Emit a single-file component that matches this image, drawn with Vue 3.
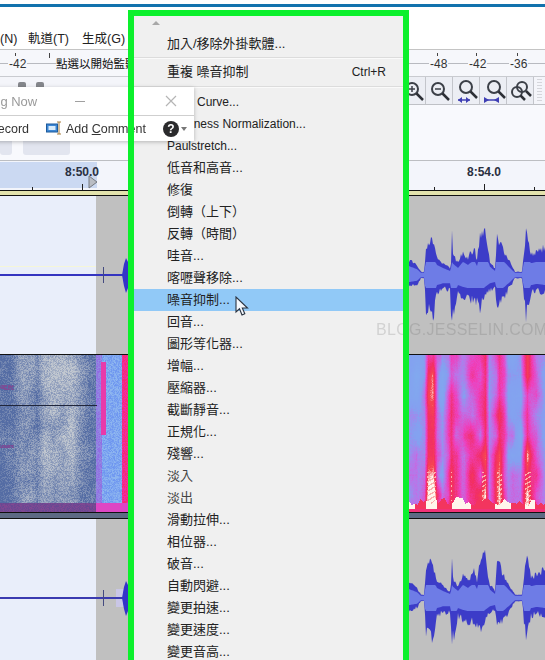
<template>
  <div class="screen" lang="zh-Hant">
    <div class="titlebar">
      <div class="blue-line"></div>
      <div class="menubar">
        <span class="m-n">(N)</span>
        <span class="m-track">軌道(T)</span>
        <span class="m-gen">生成(G)</span>
      </div>
    </div>

    <div class="meter-row">
      <div class="meter-line"></div>
      <i v-for="x in meterTicks" :key="x" class="meter-tick" :style="{ left: x + 'px' }"></i>
      <span v-for="m in meterLabels" :key="m.x" class="meter-label" :style="{ left: m.x + 'px' }">{{ m.text }}</span>
      <span class="meter-hint">點選以開始監聽</span>
    </div>

    <div class="tool-row">
      <div class="stub-icons"><i></i><i></i></div>
      <div class="zoom-tools">
        <button class="zoom-btn partial">
          <svg width="26" height="26" viewBox="0 0 26 26"><circle cx="11" cy="11" r="6" class="glass" /><path d="M8 11h6M11 8v6" class="mark" /><path d="M15.500 15.500 22 22" class="handle" /></svg>
        </button>
        <button class="zoom-btn">
          <svg width="26" height="26" viewBox="0 0 26 26"><circle cx="11" cy="11" r="6" class="glass" /><path d="M8 11h6" class="mark" /><path d="M15.500 15.500 22 22" class="handle" /></svg>
        </button>
        <button class="zoom-btn">
          <svg width="26" height="26" viewBox="0 0 26 26"><circle cx="12" cy="9" r="6" class="glass" /><path d="M16.500 13.500 23 20" class="handle" /><path d="M4 22h12" class="arrow-line" /><path d="M8 19v6l-4-3zM12 19v6l4-3z" class="arrow" /></svg>
        </button>
        <button class="zoom-btn">
          <svg width="26" height="26" viewBox="0 0 26 26"><circle cx="13" cy="9" r="6" class="glass" /><path d="M17.500 13.500 24 20" class="handle" /><path d="M3 22h15" class="arrow-line" /><path d="M3 19v6l5-3zM18 19v6l-5-3z" class="arrow" /></svg>
        </button>
        <button class="zoom-btn">
          <svg width="26" height="26" viewBox="0 0 26 26"><circle cx="14" cy="9" r="5" class="glass" /><circle cx="9" cy="14" r="5" class="glass" /><path d="M18 13 23 18M12.500 17.500 17 22" class="handle" /></svg>
        </button>
        <div class="grip"></div>
      </div>
    </div>

    <div class="blank-row">
      <div class="pale-btn first"></div>
      <div class="pale-btn second"></div>
    </div>

    <div class="ruler">
      <div class="selection"></div>
      <span class="time t1">8:50.0</span>
      <span class="time t2">8:54.0</span>
      <i v-for="t in rulerTicks" :key="t.x" class="tick" :class="{ major: t.major }" :style="{ left: t.x + 'px' }"></i>
      <svg class="sel-handle" width="10" height="14" viewBox="0 0 10 14"><path d="M1 1 9 7 1 13z" fill="#b9bdc4" stroke="#767a80" /></svg>
    </div>
    <div class="ruler-edge"></div>

    <div class="track first-track">
      <div class="track-empty"></div>
      <div class="track-clip"></div>
      <svg class="wave" width="545" height="158" viewBox="0 0 545 158">
        <rect x="0" y="70" width="96" height="1" fill="#f5f6d8" />
        <path d="M0 79H125" stroke="#3434c0" stroke-width="2" />
        <path d="M103.500 71V87" stroke="#444a80" />
        <path d="M122 79 124 68 126 62 128 66V92L126 97 124 90z" fill="#3434c8" />
        <path :d="outerPath(79, 1.1, 3)" fill="#3c3cc8" />
        <path :d="innerPath(79, 1.1)" fill="#6e7ce6" />
      </svg>
    </div>

    <div class="spectrum-wrap">
      <canvas ref="spectrum" class="spectrum" width="545" height="157"></canvas>
      <div class="spectrum-line"></div>
    </div>
    <div class="channel-gap"></div>

    <div class="track last-track">
      <div class="track-empty"></div>
      <div class="track-clip"></div>
      <svg class="wave" width="545" height="141" viewBox="0 0 545 141">
        <rect x="116" y="70" width="12" height="18" fill="#c9c6e6" />
        <path d="M0 79H125" stroke="#3a3ab0" stroke-width="2" />
        <path d="M103.500 71V87" stroke="#444a80" />
        <path d="M122 79 124 68 126 62 128 66V92L126 97 124 90z" fill="#3434c8" />
        <path :d="outerPath(79, 1.1, 9)" fill="#3c3cc8" />
        <path :d="innerPath(79, 1.1)" fill="#6e7ce6" />
      </svg>
    </div>

    <div class="watermark">BLOG.JESSELIN.COM</div>

    <div class="menu">
      <div class="scroll-up"></div>
      <template v-for="item in menuItems" :key="item.label">
        <div v-if="item.sep" class="sep" :class="{ tight: item.tight }"></div>
        <div v-else class="menu-item" :class="{ active: item.active, dim: item.dim, latin: item.latin }">
          <span>{{ item.label }}</span>
          <span v-if="item.key" class="shortcut">{{ item.key }}</span>
        </div>
      </template>
    </div>

    <div class="float-win">
      <div class="win-title">
        <span class="win-name">Stop Recording Now</span>
        <span class="win-min"></span>
        <svg class="win-close" width="12" height="12" viewBox="0 0 12 12"><path d="M1 1 11 11M11 1 1 11" stroke="#b5b5b5" stroke-width="1.200" /></svg>
      </div>
      <div class="win-tools">
        <span class="win-record">Record</span>
        <svg class="comment-icon" width="17" height="15" viewBox="0 0 17 15">
          <rect x="0.500" y="3" width="11" height="8" fill="#3d87d4" stroke="#1c5a9c" />
          <rect x="2.500" y="5" width="7" height="4" fill="#d9ecfb" />
          <path d="M11 1h4M13 1v12M11 13h4" stroke="#a67c3c" fill="none" />
        </svg>
        <span class="win-comment">Add <u>C</u>omment</span>
        <span class="help">?</span>
        <span class="caret"></span>
      </div>
    </div>

    <svg class="cursor" width="14" height="21" viewBox="0 0 14 21">
      <path d="M1 1V16L4.500 12.800 7 19 9.800 17.800 7.300 12H12.500z" fill="#f4f8fd" stroke="#2b3442" stroke-width="1.100" />
    </svg>

    <div class="frame"></div>
  </div>
</template>

<script setup>
import { ref, onMounted } from "vue";

const spectrum = ref(null);

const meterLabels = [
  { x: 8, text: "-42" },
  { x: 429, text: "-48" },
  { x: 468, text: "-42" },
  { x: 509, text: "-36" },
];

const meterTicks = [15, 49, 437, 476, 517];

const rulerTicks = [
  { x: 32 },
  { x: 82, major: true },
  { x: 434 },
  { x: 484, major: true },
  { x: 534 },
];

const menuItems = [
  { label: "加入/移除外掛軟體..." },
  { label: "sep1", sep: true, tight: true },
  { label: "重複 噪音抑制", key: "Ctrl+R" },
  { label: "sep2", sep: true },
  { label: "Filter Curve...", latin: true },
  { label: "Loudness Normalization...", latin: true },
  { label: "Paulstretch...", latin: true },
  { label: "低音和高音..." },
  { label: "修復" },
  { label: "倒轉（上下）" },
  { label: "反轉（時間）" },
  { label: "哇音..." },
  { label: "喀嚦聲移除..." },
  { label: "噪音抑制...", active: true },
  { label: "回音..." },
  { label: "圖形等化器..." },
  { label: "增幅..." },
  { label: "壓縮器..." },
  { label: "截斷靜音..." },
  { label: "正規化..." },
  { label: "殘響..." },
  { label: "淡入", dim: true },
  { label: "淡出", dim: true },
  { label: "滑動拉伸..." },
  { label: "相位器..." },
  { label: "破音..." },
  { label: "自動閃避..." },
  { label: "變更拍速..." },
  { label: "變更速度..." },
  { label: "變更音高..." },
];

// waveform outline read off the reference: [x, above centre, below centre]
const envelope = [
  [409, 13, 10], [417, 8, 8], [421, 2, 2], [424, 2, 2], [426, 22, 30], [431, 35, 33], [433, 28, 40],
  [437, 15, 15], [443, 10, 12], [450, 5, 12], [451, 10, 30], [452, 42, 42], [453, 17, 35], [458, 10, 15], [463, 20, 18],
  [468, 15, 20], [474, 23, 22], [477, 13, 22], [480, 35, 28], [485, 37, 18], [490, 12, 12], [495, 5, 10],
  [497, 35, 25], [503, 22, 20], [510, 10, 10], [515, 2, 2], [522, 2, 2], [526, 38, 37], [531, 18, 15],
  [537, 20, 13], [545, 25, 15],
];

const ampAt = (x, side) => {
  for (let i = 1; i < envelope.length; i++) {
    const a = envelope[i - 1];
    const b = envelope[i];
    if (x <= b[0]) {
      const k = (x - a[0]) / (b[0] - a[0] || 1);
      return a[side] + (b[side] - a[side]) * k;
    }
  }
  return 0;
};

// small repeatable noise so the pictures are the same on every load
const hash = (x, y) => {
  const s = Math.sin(x * 127.1 + y * 311.7) * 43758.5453;
  return s - Math.floor(s);
};

const outerPath = (center, scale, seed) => {
  let top = "";
  let bottom = "";
  for (let x = 409; x <= 545; x++) {
    const up = ampAt(x, 1) * scale * (0.82 + hash(x, seed) * 0.36) + 1;
    const down = ampAt(x, 2) * scale * (0.78 + hash(x, seed + 1) * 0.44) + 1;
    top += `${top ? "L" : "M"}${x} ${(center - up).toFixed(1)}`;
    bottom = `L${x} ${(center + down).toFixed(1)}` + bottom;
  }
  return top + bottom + "Z";
};

const innerPath = (center, scale) => {
  let top = "";
  let bottom = "";
  for (let x = 409; x <= 545; x++) {
    const up = Math.min(13, 1 + ampAt(x, 1) * scale * 0.55);
    const down = Math.min(13, 1 + ampAt(x, 2) * scale * 0.55);
    top += `${top ? "L" : "M"}${x} ${(center - up).toFixed(1)}`;
    bottom = `L${x} ${(center + down).toFixed(1)}` + bottom;
  }
  return top + bottom + "Z";
};

const smooth = (x, y) => {
  const xi = Math.floor(x);
  const yi = Math.floor(y);
  const fx = x - xi;
  const fy = y - yi;
  const top = hash(xi, yi) * (1 - fx) + hash(xi + 1, yi) * fx;
  const low = hash(xi, yi + 1) * (1 - fx) + hash(xi + 1, yi + 1) * fx;
  return top * (1 - fy) + low * fy;
};

const lookup = (pts, x) => {
  for (let i = 1; i < pts.length; i++) {
    const a = pts[i - 1];
    const b = pts[i];
    if (x <= b[0]) return a[1] + (b[1] - a[1]) * ((x - a[0]) / (b[0] - a[0]));
  }
  return pts[pts.length - 1][1];
};

const energyPts = [
  [409, 0.3], [418, 0.26], [424, 0.4], [428, 0.82], [433, 0.85], [437, 0.48], [442, 0.3], [447, 0.48], [451, 0.66],
  [455, 0.5], [462, 0.42], [470, 0.58], [480, 0.56], [485, 0.72], [489, 0.3], [493, 0.46], [499, 0.74], [503, 0.56],
  [508, 0.28], [520, 0.24], [523, 0.5], [527, 0.78], [531, 0.6], [537, 0.46], [545, 0.36],
];

// brightness of the quiet part left of the clip
const shadePts = [
  [0, 0.12], [12, 0.18], [22, 0.52], [33, 0.46], [37, 0.3], [44, 0.74], [72, 0.8], [80, 0.42], [96, 0.14],
];

// white lumps along the foot of the loud columns
const lumps = [[452, 470], [495, 510], [426, 436], [525, 534], [409, 414]];

const ramp = [
  [0, [128, 172, 238]],
  [0.28, [132, 160, 240]],
  [0.42, [186, 116, 232]],
  [0.58, [238, 64, 190]],
  [0.76, [242, 46, 100]],
  [0.9, [246, 70, 80]],
  [1, [255, 246, 236]],
];

const rampColor = (v) => {
  const val = Math.max(0, Math.min(1, v));
  for (let i = 1; i < ramp.length; i++) {
    if (val <= ramp[i][0]) {
      const k = (val - ramp[i - 1][0]) / (ramp[i][0] - ramp[i - 1][0]);
      return ramp[i][1].map((c, n) => ramp[i - 1][1][n] + (c - ramp[i - 1][1][n]) * k);
    }
  }
  return ramp[ramp.length - 1][1];
};

const drawSpectrum = () => {
  const ctx = spectrum.value.getContext("2d");
  const img = ctx.createImageData(545, 157);
  for (let y = 0; y < 157; y++) {
    for (let x = 0; x < 545; x++) {
      const fy = y / 157;
      const grain = hash(x, y) - 0.5;
      let rgb;
      if (x < 96) {
        const blotch = smooth(x / 9, y / 14) - 0.5;
        const k = Math.max(0, Math.min(1, lookup(shadePts, x) * (0.95 - fy * 0.2) + blotch * 0.4 + grain * 0.55));
        rgb = [84 + k * 110, 108 + k * 92, 164 + k * 44];
        const band = x < 14 && (Math.abs(y - 32) < 3 || Math.abs(y - 91) < 2) && grain > -0.3;
        if (band) rgb = [122, 78, 150];
        if (fy > 0.94) rgb = [116 + grain * 30, 72, 146];
      } else if (x < 129) {
        const streak = x > 100 && x < 106 && y > 6 && y < 80;
        const hot = x > 121;
        if (streak) rgb = [232, 58, 170];
        else if (hot) rgb = [244, 44, 140 + grain * 60];
        else if (x < 102) rgb = [146, 124 + grain * 40, 226];
        else rgb = [126 + grain * 36, 166 + grain * 36, 240];
        if (fy > 0.94) rgb = [222, 70, 196];
      } else {
        const swirl = smooth(x / 8, y / 20) - 0.5;
        const e = lookup(energyPts, x);
        let v = e * (0.9 + fy * fy * 0.5) + swirl * 0.34 + grain * 0.05;
        if (fy > 0.74 && e > 0.62 && Math.sin(fy * 210 + x * 0.8) > 0.55) v = 0.96;
        const inLump = lumps.some(([a, b]) => x >= a && x <= b);
        const lumpTop = 0.9 + smooth(x / 3, 2) * 0.06;
        if (fy < 0.975 && fy > lumpTop) v = inLump ? 1 : 0.8;
        else if (fy >= 0.975) v = 0.72;
        rgb = rampColor(v);
      }
      const i = (y * 545 + x) * 4;
      img.data[i] = rgb[0];
      img.data[i + 1] = rgb[1];
      img.data[i + 2] = rgb[2];
      img.data[i + 3] = 255;
    }
  }
  ctx.putImageData(img, 0, 0);
};

onMounted(() => {
  drawSpectrum();
});
</script>

<style>
html,
body {
  margin: 0;
  overflow: hidden;
}
</style>

<style scoped>
.screen {
  position: relative;
  width: 545px;
  height: 660px;
  overflow: hidden;
  background: #fff;
  font-family: "Liberation Sans", "Noto Sans CJK TC", sans-serif;
  font-size: 13px;
  color: #222;
  text-spacing-trim: space-all;
}

.titlebar {
  height: 50px;
  padding-top: 4px;
  box-sizing: border-box;
  border-bottom: 1px solid #c4c4c4;
}

.blue-line {
  height: 3px;
  background: #1272ad;
}

.menubar {
  position: relative;
  height: 43px;
}

.menubar span {
  position: absolute;
  top: 22px;
  font-size: 12.500px;
  line-height: 20px;
}

.m-n { left: 0; }
.m-track { left: 28px; }
.m-gen { left: 82px; }

.meter-row {
  position: relative;
  height: 26px;
  background: #f6f7fb;
  border-bottom: 1px solid #c9cbd0;
}

.meter-line {
  position: absolute;
  left: 0;
  right: 0;
  top: 13px;
  height: 1px;
  background: #b8bac0;
}

.meter-tick {
  position: absolute;
  top: 3px;
  width: 1px;
  height: 5px;
  background: #444;
}

.meter-label {
  position: absolute;
  top: 6px;
  font-size: 12px;
  line-height: 16px;
  color: #333;
  background: #f6f7fb;
  padding: 0 1px;
}

.meter-hint {
  position: absolute;
  left: 56px;
  top: 6px;
  font-size: 11.500px;
  line-height: 16px;
  color: #111;
  background: #f6f7fb;
  white-space: nowrap;
}

.tool-row {
  display: flex;
  justify-content: space-between;
  height: 27px;
  background: #f4f5fa;
  border-bottom: 1px solid #bfc1c6;
}

.stub-icons {
  display: flex;
  gap: 10px;
  padding: 5px 0 0 18px;
}

.stub-icons i {
  width: 8px;
  height: 5px;
  background: #85878c;
  border-radius: 2px 2px 0 0;
}

.zoom-tools {
  display: flex;
  width: 136px;
}

.zoom-btn {
  width: 27px;
  height: 27px;
  margin: 0;
  padding: 0 0 0 1px;
  border: 0;
  border-right: 1px solid #c3c5cb;
  background: #eceef4;
}

.zoom-btn svg {
  display: block;
}

.zoom-btn.partial {
  width: 17px;
  overflow: hidden;
}

.zoom-btn.partial svg {
  margin-left: -9px;
}

.glass {
  fill: none;
  stroke: #3c4048;
  stroke-width: 2;
}

.mark {
  stroke: #3c4048;
  stroke-width: 1.500;
}

.handle {
  stroke: #2d3036;
  stroke-width: 2.500;
}

.arrow {
  fill: #3f3fb4;
}

.arrow-line {
  stroke: #3f3fb4;
  stroke-width: 1.500;
}

.grip {
  flex: 1;
  margin: 2px 3px;
  background: repeating-linear-gradient(#d5d6db 0 1px, #f4f5fa 1px 3px);
}

.blank-row {
  position: relative;
  height: 56px;
  background: #f8f9fd;
  border-bottom: 1px solid #bcbec2;
  box-sizing: border-box;
}

.pale-btn {
  position: absolute;
  top: 36px;
  height: 14px;
  background: #e2e5ef;
  border-radius: 0 0 3px 3px;
}

.pale-btn.first {
  left: 0;
  width: 12px;
}

.pale-btn.second {
  left: 23px;
  width: 47px;
}

.ruler {
  position: relative;
  height: 30px;
  background: #f3f5fb;
  border-bottom: 1px solid #111;
  box-sizing: border-box;
}

.selection {
  position: absolute;
  left: 0;
  top: 1px;
  width: 97px;
  height: 26px;
  background: #cbd9f2;
}

.time {
  position: absolute;
  top: 3px;
  font-size: 12px;
  line-height: 17px;
  font-weight: 700;
  color: #2a3040;
}

.t1 { left: 65px; }
.t2 { left: 467px; }

.tick {
  position: absolute;
  bottom: 0;
  width: 1px;
  height: 3px;
  background: #222;
}

.tick.major {
  height: 6px;
}

.sel-handle {
  position: absolute;
  left: 88px;
  top: 14px;
}

.ruler-edge {
  height: 4px;
  background: #e2e2ac;
  border-bottom: 1px solid #111;
}

.track {
  position: relative;
  display: flex;
}

.first-track {
  height: 158px;
  border-bottom: 1px solid #111;
}

.last-track {
  height: 141px;
}

.track-empty {
  width: 96px;
  background: #e9eefa;
}

.track-clip {
  flex: 1;
  background: #c0c0c0;
}

.wave {
  position: absolute;
  left: 0;
  top: 0;
}

.spectrum-wrap {
  position: relative;
  height: 157px;
  border-bottom: 1px solid #111;
}

.spectrum {
  display: block;
}

.spectrum-line {
  position: absolute;
  left: 0;
  top: 50px;
  width: 97px;
  height: 1px;
  background: #20263c;
}

.channel-gap {
  height: 5px;
  background: #5d6a84;
  border-bottom: 1px solid #111;
}

.watermark {
  position: absolute;
  left: 376px;
  top: 319px;
  font-family: "Liberation Sans", sans-serif;
  font-size: 16px;
  line-height: 22px;
  letter-spacing: 0.300px;
  color: rgba(90, 90, 90, 0.2);
  white-space: nowrap;
  z-index: 2;
}

.menu {
  position: absolute;
  left: 134px;
  top: 16px;
  width: 269px;
  height: 644px;
  overflow: hidden;
  background: #f0f0f0;
  z-index: 1;
}

.scroll-up {
  width: 0;
  height: 0;
  margin: 5px 0 8px 18px;
  border-left: 4px solid transparent;
  border-right: 4px solid transparent;
  border-bottom: 4px solid #a8a8a8;
  box-sizing: content-box;
}

.menu-item {
  display: flex;
  justify-content: space-between;
  height: 22px;
  padding: 0 17px 0 33px;
  line-height: 22px;
  white-space: nowrap;
}

.menu-item.latin {
  font-size: 12px;
}

.menu-item.active {
  background: #91c9f7;
}

.menu-item.dim {
  color: #444;
}

.sep {
  height: 2px;
  margin: 3px 0;
  background: #dcdcdc;
  border-bottom: 1px solid #fafafa;
  box-sizing: border-box;
}

.sep.tight {
  margin: 2px 0;
}

.shortcut {
  font-size: 12px;
}

.float-win {
  position: absolute;
  left: -90px;
  top: 87px;
  width: 284px;
  height: 54px;
  background: #fff;
  box-shadow: 0 1px 4px rgba(0, 0, 0, 0.25);
  z-index: 3;
  font-size: 12.500px;
}

.win-title {
  display: flex;
  align-items: center;
  height: 29px;
  border-bottom: 1px solid #cfcfcf;
  box-sizing: border-box;
  color: #9a9a9a;
}

.win-name {
  width: 165px;
  margin-left: 8px;
  white-space: nowrap;
  text-align: right;
  padding-right: 50px;
  box-sizing: border-box;
  font-size: 13px;
}

.win-min {
  width: 10px;
  height: 1px;
  margin-left: -8px;
  margin-right: 80px;
  background: #a0a0a0;
}

.win-close {
  flex: none;
}

.win-tools {
  display: flex;
  align-items: center;
  height: 25px;
  color: #333;
}

.win-record {
  width: 119px;
  text-align: right;
  margin-right: 17px;
}

.comment-icon {
  margin-right: 3px;
}

.win-comment {
  width: 97px;
  white-space: nowrap;
}

.help {
  width: 16px;
  height: 16px;
  border-radius: 50%;
  background: #2a2a2c;
  color: #fff;
  font-weight: 700;
  font-size: 12px;
  line-height: 16px;
  text-align: center;
}

.caret {
  width: 0;
  height: 0;
  margin-left: 2px;
  border-left: 3px solid transparent;
  border-right: 3px solid transparent;
  border-top: 4px solid #777;
}

.cursor {
  position: absolute;
  left: 235px;
  top: 296px;
  z-index: 4;
}

.frame {
  position: absolute;
  left: 128px;
  top: 10px;
  width: 281px;
  height: 670px;
  border: 6px solid #0cf02c;
  box-sizing: border-box;
  z-index: 5;
  pointer-events: none;
}
</style>
